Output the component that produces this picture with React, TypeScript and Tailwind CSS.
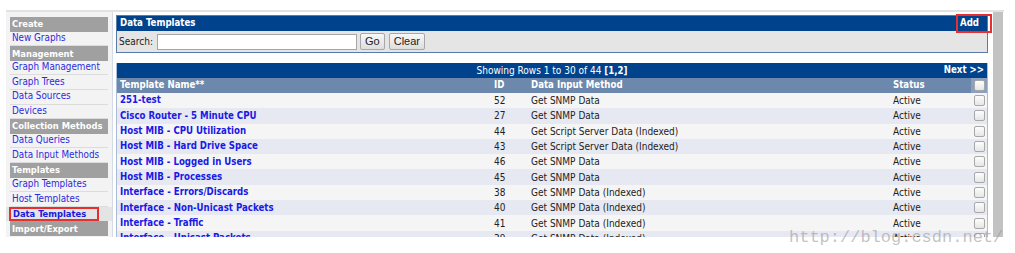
const menu: { label: string; header?: boolean; active?: boolean }[] = [
  { label: "Create", header: true },
  { label: "New Graphs" },
  { label: "Management", header: true },
  { label: "Graph Management" },
  { label: "Graph Trees" },
  { label: "Data Sources" },
  { label: "Devices" },
  { label: "Collection Methods", header: true },
  { label: "Data Queries" },
  { label: "Data Input Methods" },
  { label: "Templates", header: true },
  { label: "Graph Templates" },
  { label: "Host Templates" },
  { label: "Data Templates", active: true },
  { label: "Import/Export", header: true },
];

const rows = [
  ["251-test", "52", "Get SNMP Data"],
  ["Cisco Router - 5 Minute CPU", "27", "Get SNMP Data"],
  ["Host MIB - CPU Utilization", "44", "Get Script Server Data (Indexed)"],
  ["Host MIB - Hard Drive Space", "43", "Get Script Server Data (Indexed)"],
  ["Host MIB - Logged in Users", "46", "Get SNMP Data"],
  ["Host MIB - Processes", "45", "Get SNMP Data"],
  ["Interface - Errors/Discards", "38", "Get SNMP Data (Indexed)"],
  ["Interface - Non-Unicast Packets", "40", "Get SNMP Data (Indexed)"],
  ["Interface - Traffic", "41", "Get SNMP Data (Indexed)"],
  ["Interface - Unicast Packets", "39", "Get SNMP Data (Indexed)"],
];

function Checkbox() {
  return (
    <span className="block h-[11px] w-[11px] rounded-[2px] border border-[#a8a8a8] bg-gradient-to-b from-[#fdfdfd] to-[#e6e6e6]" />
  );
}

export default function App() {
  return (
    <div className="relative h-[253px] w-[1015px] overflow-hidden bg-white font-['DejaVu_Sans_Condensed','DejaVu_Sans',sans-serif] font-stretch-semi-condensed text-[10px] text-[#222]">
      <div className="ml-[6px] mt-[10px] flex h-[227px] w-[998px] overflow-hidden border-t-2 border-[#e2e2e2]">
        {/* Sidebar menu */}
        <aside className="w-[106px] shrink-0 bg-[#f3f3f3] px-[4px] pt-[5px] text-[9.8px]">
          {menu.map((m) =>
            m.header ? (
              <div
                key={m.label}
                className="flex h-[14.6px] items-center whitespace-nowrap bg-[#a0a0a0] pl-[2px] text-[9.3px] font-bold text-white"
              >
                {m.label}
              </div>
            ) : m.active ? (
              <div key={m.label} className="-mx-[4px] bg-[#e4e4e4] px-[3px]">
                <div className="flex h-[14.6px] w-[90px] items-center whitespace-nowrap border-2 border-[#e53030] pl-[2px] text-[9.3px] font-bold text-[#1a1ad8]">
                  {m.label}
                </div>
              </div>
            ) : (
              <div
                key={m.label}
                className="flex h-[14.6px] items-center whitespace-nowrap border-b border-[#dcdcdc] pl-[2px] text-[#2b2bdc]"
              >
                {m.label}
              </div>
            )
          )}
        </aside>
        <div className="w-[1px] shrink-0 bg-[#d4dbe4]" />

        {/* Main content */}
        <main className="ml-[3px] w-[872px] shrink-0 pt-[3px]">
          <div className="border border-[#5a7aa8]">
            <div className="relative flex h-[15px] items-center justify-between bg-[#00438c] px-[3px] text-[9.6px] font-bold text-white">
              <span>Data Templates</span>
              <span className="mr-[5px]">Add</span>
              <span className="absolute -right-[5px] -top-[2px] h-[19px] w-[36px] border-2 border-[#e53030]" />
            </div>
            <div className="flex h-[21px] items-center bg-[#e5e5e5] px-[2px]">
              <span className="w-[38px]">Search:</span>
              <span className="h-[16px] w-[200px] border border-[#a6a6a6] bg-white" />
              <span className="ml-[3px] flex h-[17px] items-center rounded-[2px] border border-[#a8a8a8] bg-gradient-to-b from-[#f8f8f8] to-[#dedede] px-[4px] font-['Liberation_Sans',sans-serif] text-[11px]">
                Go
              </span>
              <span className="ml-[4px] flex h-[17px] items-center rounded-[2px] border border-[#a8a8a8] bg-gradient-to-b from-[#f8f8f8] to-[#dedede] px-[4px] font-['Liberation_Sans',sans-serif] text-[11px]">
                Clear
              </span>
            </div>
          </div>

          <div className="mt-[10px] border-x border-[#a9bdd8]">
            <div className="relative flex h-[15px] items-center justify-center bg-[#00438c] text-white">
              <span>
                Showing Rows 1 to 30 of 44 <b className="text-[9.6px]">[1,2]</b>
              </span>
              <span className="absolute right-[3px] text-[9.6px] font-bold">Next &gt;&gt;</span>
            </div>
            <div className="flex h-[15px] items-center bg-[#6d88ad] text-[9.6px] font-bold text-white">
              <span className="w-[373px] pl-[3px]">Template Name**</span>
              <span className="w-[37px] pl-[4px]">ID</span>
              <span className="w-[362px] pl-[4px]">Data Input Method</span>
              <span className="w-[82px] pl-[4px]">Status</span>
              <span className="flex h-full w-[16px] items-center justify-center bg-[#8aa0bf]">
                <Checkbox />
              </span>
            </div>
            {rows.map((r, i) => (
              <div
                key={r[0]}
                className={
                  "flex h-[15.3px] items-center " +
                  (i % 2 === 0 ? "bg-[#f5f5f5]" : "bg-[#e7e9f2]")
                }
              >
                <span className="w-[373px] pl-[3px] text-[9.6px] font-bold text-[#1a1ae6]">{r[0]}</span>
                <span className="w-[37px] pl-[4px]">{r[1]}</span>
                <span className="w-[362px] pl-[4px]">{r[2]}</span>
                <span className="w-[82px] pl-[4px]">Active</span>
                <span className="flex w-[16px] justify-center">
                  <Checkbox />
                </span>
              </div>
            ))}
          </div>
        </main>

        <div className="ml-[5px] w-[10px] shrink-0 bg-[#c2c2c2]" />
      </div>

      {/* watermark */}
      <span className="pointer-events-none absolute left-[789px] top-[225px] font-['Liberation_Mono',monospace] text-[17px] text-[#9a9a9a]/60">
        http://blog.csdn.net/
      </span>
    </div>
  );
}
